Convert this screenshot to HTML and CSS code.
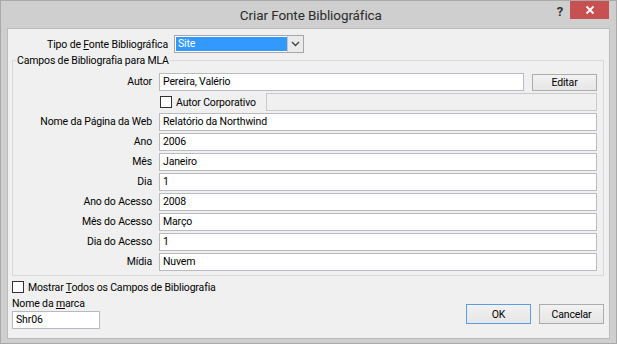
FILE: index.html
```html
<!DOCTYPE html>
<html lang="pt">
<head>
    <meta charset="UTF-8">
    <meta name="viewport" content="width=device-width, initial-scale=1.0">
    <title>Criar Fonte Bibliográfica</title>
    <link rel="stylesheet" href="styles.css">
</head>
<body>

    <div class="window">
        <div class="titlebar">
            <span class="title">Criar Fonte Bibliográfica</span>
            <span class="help">?</span>
            <span class="close">
                <svg width="10" height="10" viewBox="0 0 10 10">
                    <path d="M1.5 1.5 L8.5 8.5 M8.5 1.5 L1.5 8.5" stroke="#fff" stroke-width="1.8" fill="none"/>
                </svg>
            </span>
        </div>

        <div class="client">
            <!-- tipo de fonte -->
            <div class="type-row">
                <span class="type-label">Tipo de <u>F</u>onte Bibliográfica</span>
                <div class="select">
                    <span class="select-value">Site</span>
                    <span class="select-arrow">
                        <svg width="9" height="6" viewBox="0 0 9 6">
                            <path d="M1 1 L4.5 4.5 L8 1" stroke="#444" stroke-width="1.4" fill="none"/>
                        </svg>
                    </span>
                </div>
            </div>

            <!-- campos -->
            <fieldset class="group">
                <legend>Campos de Bibliografia para MLA</legend>
                <div class="fields">
                    <span class="lbl">Autor</span>
                    <div class="with-btn">
                        <div class="field">Pereira, Valério</div>
                        <button class="btn edit-btn">Editar</button>
                    </div>

                    <span class="lbl"></span>
                    <div class="corp">
                        <span class="check"></span>
                        <span class="corp-text">Autor Corporativo</span>
                        <div class="field disabled"></div>
                    </div>

                    <span class="lbl">Nome da Página da Web</span>
                    <div class="field">Relatório da Northwind</div>

                    <span class="lbl">Ano</span>
                    <div class="field">2006</div>

                    <span class="lbl">Mês</span>
                    <div class="field">Janeiro</div>

                    <span class="lbl">Dia</span>
                    <div class="field">1</div>

                    <span class="lbl">Ano do Acesso</span>
                    <div class="field">2008</div>

                    <span class="lbl">Mês do Acesso</span>
                    <div class="field">Março</div>

                    <span class="lbl">Dia do Acesso</span>
                    <div class="field">1</div>

                    <span class="lbl">Mídia</span>
                    <div class="field">Nuvem</div>
                </div>
            </fieldset>

            <div class="show-all">
                <span class="check"></span>
                <span>Mostrar <u>T</u>odos os Campos de Bibliografia</span>
            </div>

            <div class="footer">
                <div class="tag">
                    <div class="tag-label">Nome da <u>m</u>arca</div>
                    <div class="field tag-field">Shr06</div>
                </div>
                <div class="buttons">
                    <button class="btn default">OK</button>
                    <button class="btn">Cancelar</button>
                </div>
            </div>
        </div>
    </div>

</body>
</html>
```

FILE: styles.css
```css
body {
    margin: 0;
    padding: 0;
    font-family: Roboto, "Noto Sans", sans-serif;
    font-size: 10.5px;
    letter-spacing: -0.15px;
    color: #000;
}

.window {
    width: 617px;
    height: 344px;
    box-sizing: border-box;
    background-color: #cfcfcf;
    border: 1px solid #a9a9a9;
    padding: 0 6px 4px 6px;
    display: flex;
    flex-direction: column;
}

/* barra de título */
.titlebar {
    height: 27px;
    display: flex;
    align-items: flex-start;
    padding-left: 58px;
}

.title {
    flex: 1;
    text-align: center;
    font-size: 13.5px;
    letter-spacing: -0.1px;
    color: #2b2b2b;
    line-height: 28px;
}

.help {
    font-weight: bold;
    font-size: 13px;
    color: #333;
    margin-top: 3px;
    margin-right: 7px;
}

.close {
    width: 39px;
    height: 18px;
    background-color: #c75050;
    display: flex;
    align-items: center;
    justify-content: center;
    margin-right: 1px;
}

/* área do diálogo */
.client {
    flex: 1;
    background-color: #f0f0f0;
    border: 1px solid #bcbcbc;
    padding: 6px 5px 0 4px;
}

.type-row {
    display: flex;
    align-items: center;
    height: 18px;
}

.type-label {
    width: 156px;
    text-align: right;
    margin-right: 6px;
}

.select {
    width: 130px;
    height: 18px;
    box-sizing: border-box;
    border: 1px solid #a6a6a6;
    background-color: #fff;
    display: flex;
    padding: 1px 0 1px 1px;
}

.select-value {
    flex: 1;
    background-color: #3399ff;
    color: #fff;
    line-height: 14px;
    padding-left: 2px;
}

.select-arrow {
    width: 15px;
    margin: -1px 0;
    border-left: 1px solid #c6c6c6;
    background-color: #eaeaea;
    display: flex;
    align-items: center;
    justify-content: center;
}

.group {
    margin: 0;
    padding: 5px 6px 4px 3px;
    border: 1px solid #d8d8d8;
}

.group legend {
    padding: 0 1px;
    line-height: 15px;
}

.fields {
    display: grid;
    grid-template-columns: 136px 1fr;
    grid-auto-rows: 18px;
    column-gap: 7px;
    row-gap: 2px;
}

.lbl {
    text-align: right;
    line-height: 18px;
}

.field {
    height: 18px;
    box-sizing: border-box;
    border: 1px solid #b9b9c1;
    background-color: #fff;
    padding-left: 3px;
    line-height: 16px;
    color: #000;
}

.field.disabled {
    background-color: #f0f0f0;
    border-color: #cacaca;
}

.with-btn {
    display: flex;
}

.with-btn .field {
    flex: 1;
}

.btn {
    font-family: inherit;
    font-size: 10.5px;
    letter-spacing: -0.15px;
    color: #000;
    height: 17px;
    padding: 0;
    border: 1px solid #acacac;
    background: linear-gradient(#f2f2f2, #e6e6e6);
}

.edit-btn {
    width: 65px;
    margin-left: 8px;
    margin-top: 1px;
}

.corp {
    display: flex;
    align-items: center;
}

.check {
    width: 12px;
    height: 12px;
    box-sizing: border-box;
    border: 1px solid #333;
    background-color: #fff;
    flex-shrink: 0;
}

.corp .check {
    margin-left: 1px;
}

.corp-text {
    margin-left: 4px;
    margin-right: 10px;
}

.corp .field {
    flex: 1;
}

.show-all {
    display: flex;
    align-items: center;
    margin-top: 4px;
    height: 14px;
}

.show-all .check {
    margin-right: 4px;
}

.footer {
    display: flex;
    justify-content: space-between;
    align-items: flex-end;
    margin-top: 2px;
}

.tag-label {
    line-height: 15px;
}

.tag-field {
    width: 88px;
}

.buttons {
    display: flex;
    gap: 8px;
    margin-bottom: 5px;
}

.buttons .btn {
    width: 65px;
    height: 20px;
}

.btn.default {
    border-color: #5b9ee3;
}
```
